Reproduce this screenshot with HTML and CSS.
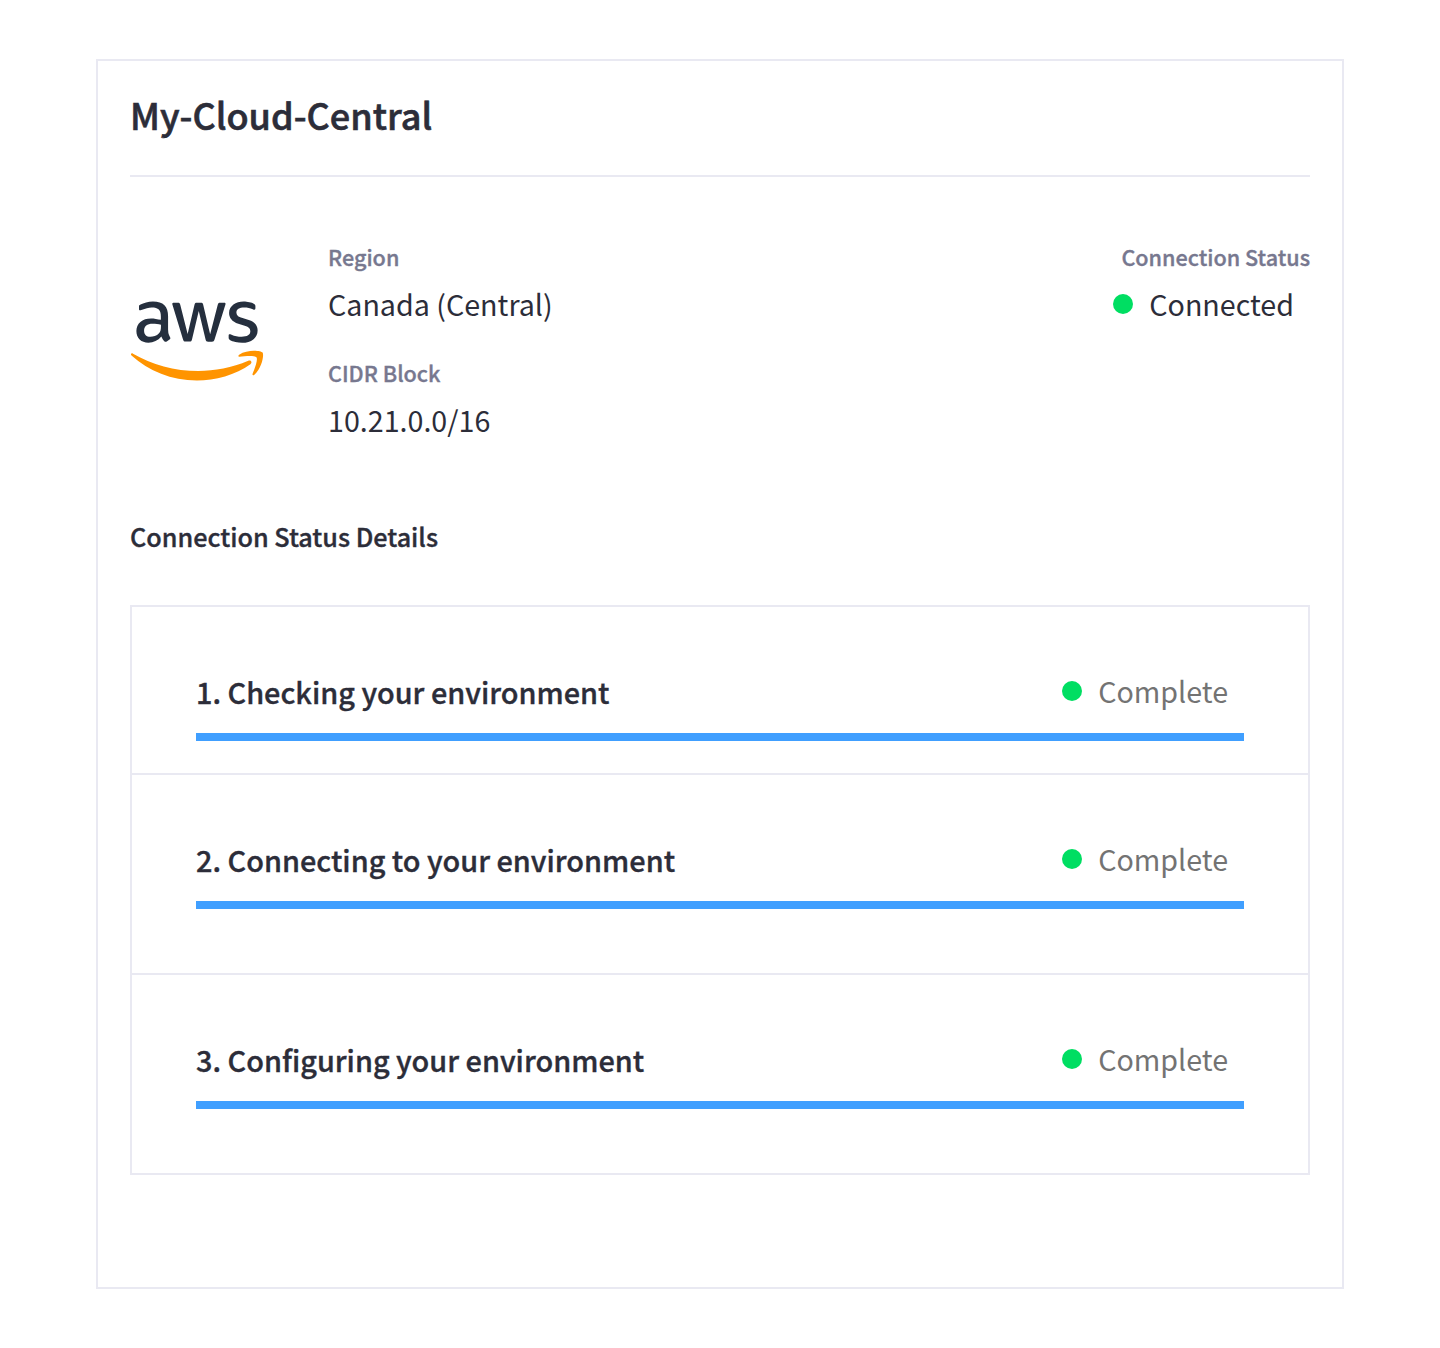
FILE: index.html
```html
<!DOCTYPE html>
<html lang="en">
<head>
<meta charset="utf-8">
<title>My-Cloud-Central</title>
<link rel="stylesheet" href="styles.css">
</head>
<body>
<main class="card">
  <h1 class="title">My-Cloud-Central</h1>
  <section class="summary">
    <svg class="logo" viewBox="0 0 304 182" role="img" aria-label="aws">
      <path fill="#252f3e" d="M86.400 66.400c0 3.700.4 6.700 1.100 8.900.8 2.200 1.800 4.600 3.200 7.200.5.800.7 1.600.7 2.300 0 1-.6 2-1.900 3l-6.300 4.200c-.9.6-1.800.9-2.600.9-1 0-2-.5-3-1.400C76.200 90 75 88.400 74 86.800c-1-1.700-2-3.600-3.100-5.900-7.800 9.200-17.600 13.800-29.400 13.800-8.400 0-15.100-2.400-20-7.200-4.900-4.800-7.400-11.200-7.400-19.200 0-8.500 3-15.400 9.100-20.600 6.100-5.200 14.200-7.800 24.500-7.800 3.400 0 6.900.3 10.600.8 3.700.5 7.500 1.300 11.500 2.200v-7.300c0-7.600-1.600-12.900-4.700-16-3.200-3.100-8.600-4.600-16.300-4.600-3.500 0-7.100.4-10.800 1.300-3.700.9-7.300 2-10.800 3.400-1.600.7-2.800 1.100-3.500 1.300-.7.200-1.200.3-1.600.3-1.400 0-2.100-1-2.100-3.100v-4.900c0-1.600.2-2.800.7-3.500.5-.7 1.400-1.400 2.800-2.100 3.500-1.800 7.700-3.300 12.600-4.500C41 1.900 46.200 1.300 51.700 1.300c11.900 0 20.600 2.700 26.200 8.100 5.500 5.400 8.300 13.600 8.300 24.600v32.400h.2zM45.800 81.600c3.300 0 6.700-.6 10.300-1.800 3.600-1.200 6.800-3.400 9.500-6.400 1.600-1.900 2.800-4 3.400-6.400.6-2.400 1-5.300 1-8.700v-4.200c-2.900-.7-6-1.300-9.200-1.700-3.200-.4-6.300-.6-9.400-.6-6.700 0-11.600 1.300-14.900 4-3.300 2.700-4.900 6.500-4.900 11.500 0 4.700 1.200 8.200 3.700 10.600 2.400 2.500 5.900 3.700 10.500 3.700zm80.300 10.800c-1.800 0-3-.3-3.800-1-.8-.6-1.500-2-2.100-3.900L96.700 10.200c-.6-2-.9-3.300-.9-4 0-1.600.8-2.500 2.400-2.500h9.800c1.900 0 3.200.3 3.900 1 .8.6 1.400 2 2 3.900l16.800 66.200 15.600-66.200c.5-2 1.100-3.300 1.900-3.900.8-.6 2.200-1 4-1h8c1.900 0 3.200.3 4 1 .8.6 1.500 2 1.900 3.900l15.800 67 17.300-67c.6-2 1.300-3.300 2-3.900.8-.6 2.100-1 3.900-1h9.300c1.600 0 2.500.8 2.500 2.500 0 .5-.1 1-.2 1.600-.1.600-.3 1.400-.7 2.500l-24.100 77.300c-.6 2-1.300 3.300-2.100 3.900-.8.6-2.100 1-3.800 1h-8.600c-1.900 0-3.200-.3-4-1-.8-.7-1.500-2-1.900-4L156 23l-15.400 64.400c-.5 2-1.100 3.300-1.900 4-.8.7-2.200 1-4 1h-8.600zm128.500 2.700c-5.200 0-10.400-.6-15.400-1.800-5-1.200-8.900-2.500-11.500-4-1.600-.9-2.700-1.900-3.100-2.800-.4-.9-.6-1.900-.6-2.800v-5.100c0-2.100.8-3.100 2.300-3.100.6 0 1.200.1 1.800.3.600.2 1.500.6 2.500 1 3.400 1.500 7.100 2.700 11 3.500 4 .8 7.900 1.200 11.900 1.200 6.300 0 11.200-1.100 14.600-3.300 3.400-2.200 5.200-5.400 5.200-9.500 0-2.800-.9-5.100-2.700-7-1.800-1.900-5.200-3.600-10.100-5.200L246 52c-7.300-2.300-12.700-5.700-16-10.200-3.300-4.400-5-9.300-5-14.500 0-4.200.9-7.900 2.700-11.100 1.800-3.200 4.200-6 7.200-8.200 3-2.300 6.400-4 10.400-5.200 4-1.200 8.200-1.700 12.600-1.700 2.200 0 4.500.1 6.700.4 2.300.3 4.400.7 6.500 1.100 2 .5 3.900 1 5.700 1.600 1.800.6 3.200 1.200 4.200 1.800 1.400.8 2.400 1.600 3 2.500.6.800.9 1.900.9 3.300v4.700c0 2.100-.8 3.200-2.300 3.200-.8 0-2.100-.4-3.800-1.200-5.700-2.600-12.100-3.900-19.200-3.900-5.700 0-10.200.9-13.300 2.800-3.100 1.900-4.700 4.800-4.700 8.900 0 2.800 1 5.200 3 7.100 2 1.900 5.700 3.800 11 5.500l14.200 4.500c7.200 2.300 12.400 5.500 15.500 9.600 3.100 4.100 4.600 8.800 4.600 14 0 4.300-.9 8.200-2.600 11.600-1.800 3.400-4.200 6.400-7.300 8.800-3.100 2.500-6.800 4.300-11.100 5.600-4.500 1.400-9.200 2.100-14.300 2.100z"/>
      <path fill="#ff9400" d="M273.500 143.700c-32.900 24.300-80.700 37.200-121.800 37.200-57.600 0-109.500-21.300-148.700-56.700-3.100-2.800-.3-6.600 3.400-4.400 42.400 24.600 94.700 39.500 148.800 39.500 36.500 0 76.600-7.600 113.500-23.200 5.500-2.500 10.200 3.600 4.800 7.600z"/>
      <path fill="#ff9400" d="M287.200 128.100c-4.200-5.400-27.800-2.600-38.500-1.300-3.200.4-3.700-2.400-.8-4.500 18.800-13.200 49.700-9.400 53.300-5 3.600 4.500-1 35.400-18.600 50.200-2.700 2.300-5.300 1.100-4.100-1.900 4-9.900 12.900-32.200 8.700-37.500z"/>
    </svg>
    <dl class="facts">
      <dt>Region</dt><dd>Canada (Central)</dd>
      <dt>CIDR Block</dt><dd>10.21.0.0/16</dd>
    </dl>
    <div class="connection">
      <div class="label">Connection Status</div>
      <div class="status"><i class="dot"></i>Connected</div>
    </div>
  </section>
  <h2 class="subtitle">Connection Status Details</h2>
  <ol class="steps">
    <li class="step"><div class="row"><h3>1. Checking your environment</h3><div class="status muted"><i class="dot"></i>Complete</div></div><div class="bar"></div></li>
    <li class="step"><div class="row"><h3>2. Connecting to your environment</h3><div class="status muted"><i class="dot"></i>Complete</div></div><div class="bar"></div></li>
    <li class="step"><div class="row"><h3>3. Configuring your environment</h3><div class="status muted"><i class="dot"></i>Complete</div></div><div class="bar"></div></li>
  </ol>
</main>
</body>
</html>
```
FILE: styles.css
```css
* { box-sizing: border-box; margin: 0; padding: 0; }
body { background: #fff; color: #2c2d39; font-family: "Noto Sans CJK SC", "Open Sans", sans-serif; padding: 59px 96px; }
.card { height: 1230px; border: 2px solid #e9e9f2; padding: 0 32px; }
h1, h2, h3, dt, .label { font-weight: 500; -webkit-text-stroke: 0.35px currentColor; }
.title { height: 116px; border-bottom: 2px solid #e9e9f2; font-size: 36.05px; -webkit-text-stroke-width: 0.6px; line-height: 106px; }
.summary { display: flex; height: 332px; padding-top: 60px; }
.logo { width: 134px; height: 80px; margin: 64px 64px 0 0; }
.facts { flex: 1; }
dt, .label { font-size: 21.6px; line-height: 40px; color: #77788f; }
dd { font-size: 28.65px; line-height: 54px; height: 76px; }
.connection { text-align: right; }
.status { display: flex; align-items: center; justify-content: flex-end; font-size: 28.65px; line-height: 54px; padding-right: 16px; }
.dot { width: 20px; height: 20px; border-radius: 50%; background: #00de62; margin-right: 16px; }
.subtitle { font-size: 25.2px; line-height: 54px; height: 96px; }
.steps { list-style: none; border: 2px solid #e9e9f2; }
.step { height: 200px; padding: 56px 64px 0; border-bottom: 2px solid #e9e9f2; }
.step:first-child { height: 168px; }
.step:last-child { height: 198px; border-bottom: 0; }
.row { display: flex; justify-content: space-between; height: 70px; }
h3 { font-size: 28.87px; line-height: 58px; }
.muted { color: #737373; height: 56px; line-height: 56px; }
.bar { height: 8px; background: #409fff; }
```
